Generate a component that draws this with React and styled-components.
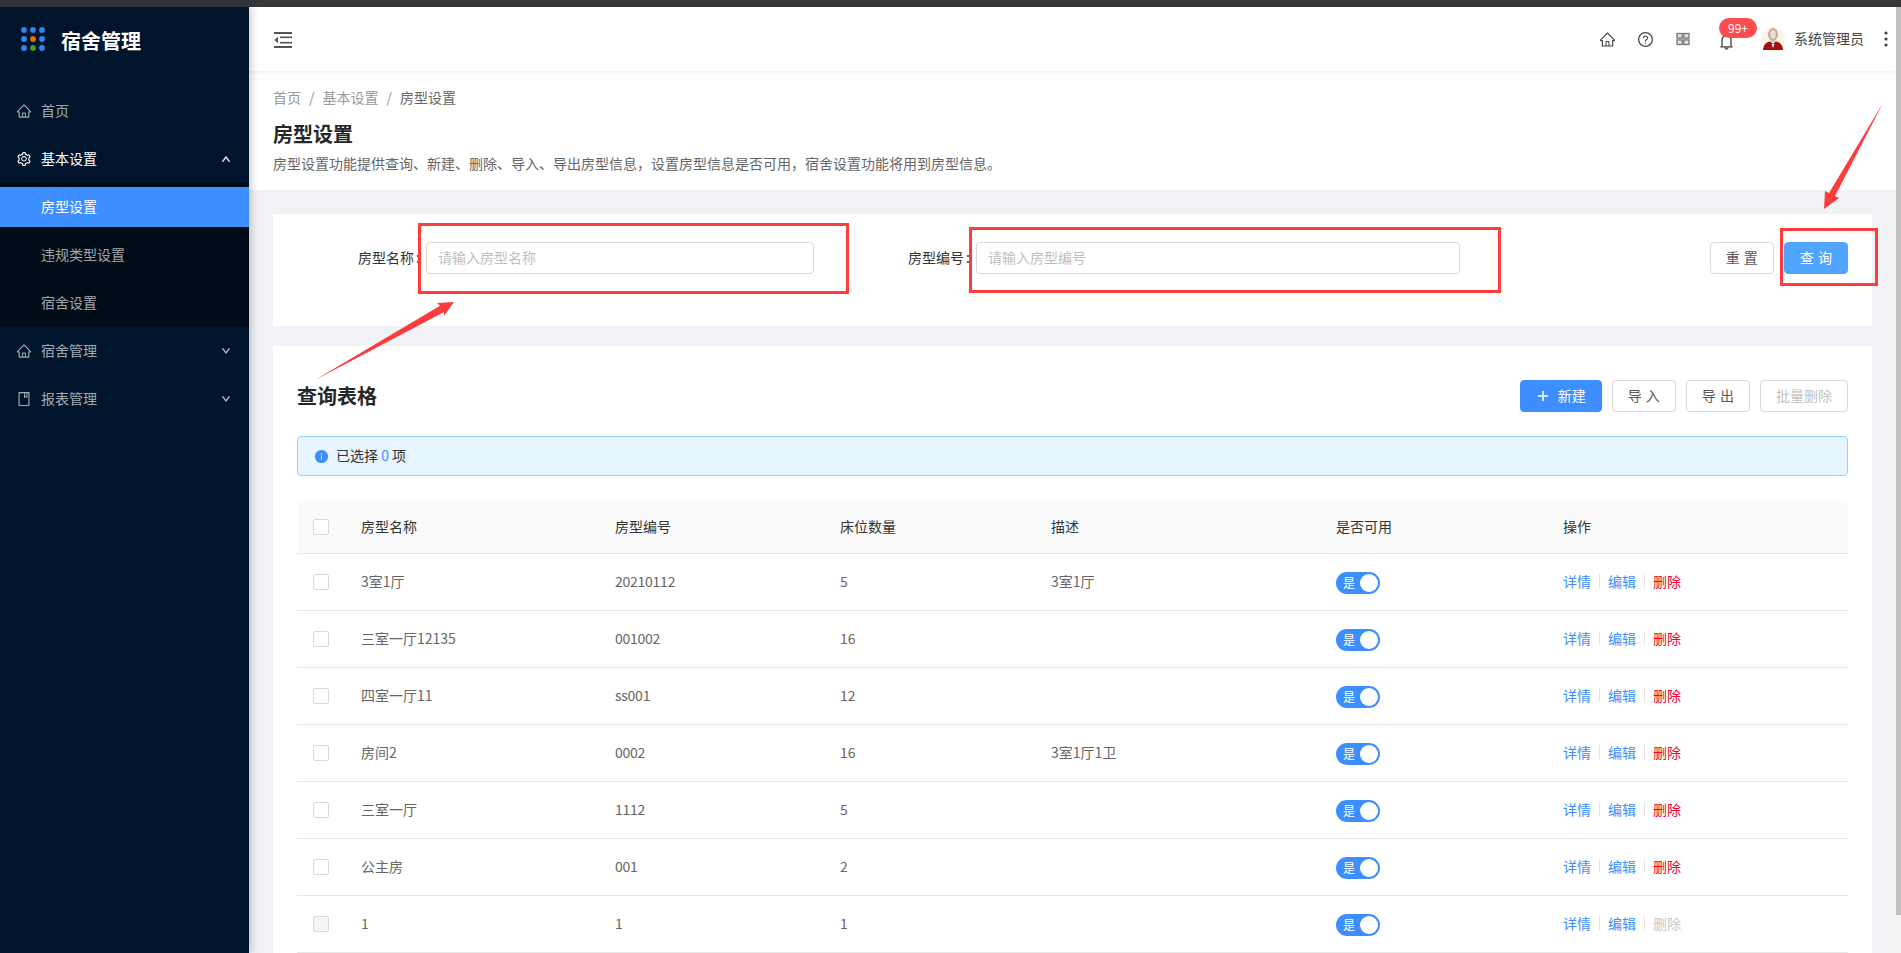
import React from "react";
import styled, { createGlobalStyle } from "styled-components";
import {
  AiOutlineHome,
  AiOutlineSetting,
  AiOutlineBook,
  AiOutlineUp,
  AiOutlineDown,
  AiOutlineQuestionCircle,
  AiOutlineBell,
  AiOutlinePlus,
  AiFillInfoCircle,
} from "react-icons/ai";

const GlobalStyle = createGlobalStyle`
  html, body { margin: 0; padding: 0; height: 100%; overflow: hidden; }
  body { font-family: "Noto Sans CJK SC", "Noto Sans", sans-serif; font-size: 14px; color: #333; background: #f0f2f5; }
  * { box-sizing: border-box; }
  #root { height: 100%; }
`;

const Page = styled.div`
  height: 953px;
  display: flex;
  flex-direction: column;
`;
const TopStrip = styled.div`
  height: 7px;
  flex: none;
  background: #35363a;
`;
const Body = styled.div`
  flex: 1;
  min-height: 0;
  display: flex;
`;

/* Sidebar */
const Sidebar = styled.aside`
  width: 249px;
  flex: none;
  background: #00152c;
  box-shadow: 2px 0 8px rgba(29, 35, 41, 0.25);
  position: relative;
  z-index: 2;
`;
const Brand = styled.div`
  height: 64px;
  display: flex;
  align-items: center;
  gap: 16px;
  padding-left: 21px;
`;
const BrandName = styled.span`
  margin-top: 3px;
  font-size: 20px;
  line-height: 28px;
  font-weight: 700;
  color: #fff;
`;
const Menu = styled.nav`
  display: flex;
  flex-direction: column;
  padding-top: 16px;
`;
const MenuItem = styled.div`
  height: 40px;
  margin: 4px 0;
  padding: 0 18px 2px 16px;
  display: flex;
  align-items: center;
  gap: 9px;
  color: ${(p) => (p.$open ? "#fff" : "rgba(255, 255, 255, 0.65)")};
  font-size: 14px;
  line-height: 22px;
  svg { margin-top: 2px; flex: none; }
  svg.lead { font-size: 16px; }
  svg.caret { font-size: 10px; margin-left: auto; stroke: currentColor; stroke-width: 70; }
`;
const SubMenu = styled.div`
  display: flex;
  flex-direction: column;
  background: #000c17;
`;
const SubItem = styled.div`
  height: 40px;
  margin: 4px 0;
  padding: 0 0 2px 41px;
  display: flex;
  align-items: center;
  font-size: 14px;
  color: ${(p) => (p.$active ? "#fff" : "rgba(255, 255, 255, 0.65)")};
  background: ${(p) => (p.$active ? "#3d8fff" : "transparent")};
`;

/* Main */
const Main = styled.main`
  flex: 1;
  min-width: 0;
  overflow: hidden;
  background: #f0f2f5;
`;
const ScrollRail = styled.div`
  width: 5px;
  flex: none;
  background: #f3f3f3;
`;
const ScrollThumb = styled.div`
  height: 908px;
  background: #c0c0c0;
`;
const TopBar = styled.header`
  height: 64px;
  background: #fff;
  box-shadow: 0 1px 4px rgba(0, 21, 41, 0.08);
  display: flex;
  align-items: center;
  padding-left: 25px;
  position: relative;
`;
const CollapseIcon = styled.svg`
  width: 18px;
  height: 16px;
  margin-top: 2px;
  flex: none;
`;
const TopActions = styled.div`
  margin-left: auto;
  display: flex;
  align-items: center;
`;
const TopIcon = styled.span`
  width: 38px;
  height: 38px;
  display: flex;
  align-items: center;
  justify-content: center;
  font-size: 17px;
  color: #444;
  position: relative;
`;
const BellBox = styled(TopIcon)`
  margin: 0 16px 0 5px;
  font-size: 19px;
  svg { margin-top: 5px; }
`;
const Badge = styled.span`
  position: absolute;
  left: 12px;
  top: -2px;
  width: 38px;
  height: 20px;
  border-radius: 10px;
  background: #ff4d4f;
  color: #fff;
  font-size: 12px;
  line-height: 20px;
  text-align: center;
`;
const Avatar = styled.svg`
  width: 24px;
  height: 24px;
  flex: none;
`;
const UserName = styled.span`
  margin: 0 12px 0 9px;
  color: #444;
  font-size: 14px;
  line-height: 22px;
  padding-bottom: 2px;
`;
const Kebab = styled.svg`
  width: 20px;
  height: 20px;
  flex: none;
`;

const PageHead = styled.section`
  background: #fff;
  padding: 15px 24px 16px;
`;
const Crumbs = styled.div`
  font-size: 14px;
  line-height: 22px;
  color: #999;
`;
const CrumbSep = styled.span`
  margin: 0 8px;
`;
const CrumbLast = styled.span`
  color: #666;
`;
const PageTitle = styled.h1`
  margin: 12px 0 0;
  font-size: 20px;
  line-height: 28px;
  font-weight: 700;
  color: #262626;
`;
const PageDesc = styled.p`
  margin: 4px 0 0;
  font-size: 14px;
  line-height: 22px;
  color: #666;
`;

const Content = styled.div`
  padding: 24px;
  display: flex;
  flex-direction: column;
  gap: 20px;
`;
const Card = styled.section`
  background: #fff;
`;
const SearchCard = styled(Card)`
  display: flex;
  align-items: center;
  padding: 28px 24px 52px 0;
`;
const Field = styled.label`
  display: flex;
  align-items: center;
  margin-right: ${(p) => p.$gapAfter}px;
`;
const FieldLabel = styled.span`
  width: ${(p) => p.$width}px;
  padding: 0 6px 2px 0;
  text-align: right;
  color: #333;
  font-size: 14px;
  line-height: 22px;
`;
const Colon = styled.span`
  margin-left: 2px;
`;
const TextInput = styled.input`
  width: ${(p) => p.$width}px;
  height: 32px;
  padding: 0 11px 2px;
  border: 1px solid #d9d9d9;
  border-radius: 4px;
  font: inherit;
  color: #333;
  outline: none;
  &::placeholder { color: #bfbfbf; opacity: 1; }
`;
const SearchButtons = styled.div`
  margin-left: auto;
  display: flex;
  gap: 10px;
`;
const Button = styled.button`
  height: 32px;
  padding: 0 15px 2px;
  display: inline-flex;
  align-items: center;
  justify-content: center;
  gap: 8px;
  border-radius: 4px;
  font: inherit;
  line-height: 22px;
  word-spacing: 1px;
  white-space: pre;
  border: 1px solid ${(p) => (p.$kind === "primary" ? "#3d8fff" : p.$kind === "soft" ? "#52a5ff" : "#d9d9d9")};
  background: ${(p) => (p.$kind === "primary" ? "#3d8fff" : p.$kind === "soft" ? "#52a5ff" : "#fff")};
  color: ${(p) => (p.$kind === "primary" || p.$kind === "soft" ? "#fff" : p.$kind === "disabled" ? "#c4c4c4" : "#595959")};
  svg { margin-top: 2px; stroke: currentColor; stroke-width: 40; }
`;

const TableCard = styled(Card)`
  padding: 34px 24px 16px;
`;
const TableHead = styled.div`
  display: flex;
  align-items: center;
  justify-content: space-between;
`;
const TableTitle = styled.h2`
  margin: 0;
  font-size: 20px;
  line-height: 28px;
  font-weight: 700;
  color: #262626;
`;
const TableTools = styled.div`
  display: flex;
  gap: 10px;
`;
const Alert = styled.div`
  margin-top: 24px;
  height: 40px;
  padding: 0 16px;
  display: flex;
  align-items: center;
  gap: 7px;
  background: #e6f5ff;
  border: 1px solid #91d5ff;
  border-radius: 4px;
  color: #333;
  line-height: 22px;
  svg { color: #3d8fff; font-size: 15px; }
`;
const AlertText = styled.span`
  padding-bottom: 2px;
`;
const AlertCount = styled.span`
  color: #3d8fff;
`;
const Table = styled.div`
  margin-top: 24px;
`;
const Row = styled.div`
  display: grid;
  grid-template-columns: 64px 254px 225px 211px 285px 227px 1fr;
  align-items: center;
  height: ${(p) => (p.$head ? 54 : 57)}px;
  border-bottom: 1px solid #e8e8e8;
  background: ${(p) => (p.$head ? "#fafafa" : "#fff")};
  border-radius: ${(p) => (p.$head ? "4px 4px 0 0" : "0")};
  color: ${(p) => (p.$head ? "#333" : "#666")};
  line-height: 22px;
`;
const HeadCell = styled.span`
  padding-bottom: 1px;
`;
const Cell = styled.span`
  padding-bottom: 2px;
`;
const Code = styled(Cell)`
  letter-spacing: -0.25px;
`;
const Check = styled.span`
  display: block;
  width: 16px;
  height: 16px;
  margin-left: 16px;
  border: 1px solid #d9d9d9;
  border-radius: 2px;
  background: ${(p) => (p.$disabled ? "#f5f5f5" : "#fff")};
`;
const Toggle = styled.span`
  width: 44px;
  height: 22px;
  margin-top: 2px;
  border-radius: 11px;
  background: #3d8fff;
  color: #fff;
  font-size: 12px;
  line-height: 21px;
  padding-left: 7px;
  display: block;
  position: relative;
`;
const Knob = styled.i`
  position: absolute;
  right: 2px;
  top: 2px;
  width: 18px;
  height: 18px;
  border-radius: 50%;
  background: #fff;
`;
const Actions = styled.div`
  display: flex;
  align-items: center;
  padding-bottom: 2px;
`;
const ActionLink = styled.span`
  color: ${(p) => (p.$danger ? "#f5002d" : p.$disabled ? "#c8c8c8" : "#3d8fff")};
`;
const ActionSep = styled.i`
  width: 1px;
  height: 14px;
  margin: 0 8px;
  background: #e4e4e4;
`;

const Annotation = styled.svg`
  position: fixed;
  left: 0;
  top: 0;
  width: 1901px;
  height: 953px;
  pointer-events: none;
  z-index: 10;
`;

const rooms = [
  ["3室1厅", "20210112", "5", "3室1厅", true],
  ["三室一厅12135", "001002", "16", "", true],
  ["四室一厅11", "ss001", "12", "", true],
  ["房间2", "0002", "16", "3室1厅1卫", true],
  ["三室一厅", "1112", "5", "", true],
  ["公主房", "001", "2", "", true],
  ["1", "1", "1", "", false],
];

const DESCRIPTION =
  "房型设置功能提供查询、新建、删除、导入、导出房型信息\uFF0C设置房型信息是否可用\uFF0C宿舍设置功能将用到房型信息。";

const LogoMark = () => (
  <svg width="24" height="24" viewBox="0 0 24 24" style={{ flex: "none" }}>
    {[0, 1, 2].flatMap((r) =>
      [0, 1, 2].map((c) => (
        <circle
          key={`${r}${c}`}
          cx={3 + c * 9}
          cy={3 + r * 9}
          r="2.9"
          fill={r === 1 && c === 1 ? "#ee6c00" : r === 2 && c === 1 ? "#3f9c2f" : "#2f86f0"}
        />
      ))
    )}
  </svg>
);

const GridIcon = () => (
  <svg width="14" height="14" viewBox="0 0 14 14" fill="#e2e2e2" stroke="#757575" strokeWidth="1.3">
    <rect x="1" y="1.5" width="5.2" height="4.6" />
    <rect x="7.8" y="1.5" width="5.2" height="4.6" />
    <rect x="1" y="7.9" width="5.2" height="4.6" />
    <rect x="7.8" y="7.9" width="5.2" height="4.6" />
  </svg>
);

const UserAvatar = () => (
  <Avatar viewBox="0 0 24 24">
    <circle cx="12" cy="12" r="12" fill="#fbf5e8" />
    <ellipse cx="12" cy="7.5" rx="5" ry="6.5" fill="#cfa899" />
    <ellipse cx="12" cy="7.5" rx="2.8" ry="4.2" fill="#ecdcd4" />
    <path d="M2 23c0-5 3.6-8 7-8.5h6c3.400 .5 7 3.500 7 8.500z" fill="#a50e0e" />
    <path d="M9.600 14.500h4.800L12 21z" fill="#fff" />
    <path d="M10 15.500l2 1 2-1v2l-2-1-2 1z" fill="#7a0a0a" />
  </Avatar>
);

export default function App() {
  return (
    <>
      <GlobalStyle />
      <Page>
        <TopStrip />
        <Body>
          <Sidebar>
            <Brand>
              <LogoMark />
              <BrandName>宿舍管理</BrandName>
            </Brand>
            <Menu>
              <MenuItem>
                <AiOutlineHome className="lead" />
                首页
              </MenuItem>
              <MenuItem $open>
                <AiOutlineSetting className="lead" />
                基本设置
                <AiOutlineUp className="caret" />
              </MenuItem>
              <SubMenu>
                <SubItem $active>房型设置</SubItem>
                <SubItem>违规类型设置</SubItem>
                <SubItem>宿舍设置</SubItem>
              </SubMenu>
              <MenuItem>
                <AiOutlineHome className="lead" />
                宿舍管理
                <AiOutlineDown className="caret" />
              </MenuItem>
              <MenuItem>
                <AiOutlineBook className="lead" />
                报表管理
                <AiOutlineDown className="caret" />
              </MenuItem>
            </Menu>
          </Sidebar>
          <Main>
            <TopBar>
              <CollapseIcon viewBox="0 0 18 16">
                <g fill="#555">
                  <rect x="0" y="0" width="18" height="2" />
                  <rect x="0" y="14" width="18" height="2" />
                  <rect x="6" y="4.500" width="12" height="1.600" />
                  <rect x="6" y="9.900" width="12" height="1.600" />
                  <polygon points="0.4,8 4,4.8 4,11.2" />
                </g>
              </CollapseIcon>
              <TopActions>
                <TopIcon>
                  <AiOutlineHome />
                </TopIcon>
                <TopIcon>
                  <AiOutlineQuestionCircle />
                </TopIcon>
                <TopIcon>
                  <GridIcon />
                </TopIcon>
                <BellBox>
                  <AiOutlineBell />
                  <Badge>99+</Badge>
                </BellBox>
                <UserAvatar />
                <UserName>系统管理员</UserName>
                <Kebab viewBox="0 0 20 20">
                  <circle cx="10" cy="4" r="1.6" fill="#444" />
                  <circle cx="10" cy="10" r="1.6" fill="#444" />
                  <circle cx="10" cy="16" r="1.6" fill="#444" />
                </Kebab>
              </TopActions>
            </TopBar>
            <PageHead>
              <Crumbs>
                首页
                <CrumbSep>/</CrumbSep>
                基本设置
                <CrumbSep>/</CrumbSep>
                <CrumbLast>房型设置</CrumbLast>
              </Crumbs>
              <PageTitle>房型设置</PageTitle>
              <PageDesc>{DESCRIPTION}</PageDesc>
            </PageHead>
            <Content>
              <SearchCard>
                <Field $gapAfter={92}>
                  <FieldLabel $width={153}>
                    房型名称<Colon>:</Colon>
                  </FieldLabel>
                  <TextInput $width={388} placeholder="请输入房型名称" />
                </Field>
                <Field $gapAfter={0}>
                  <FieldLabel $width={70}>
                    房型编号<Colon>:</Colon>
                  </FieldLabel>
                  <TextInput $width={484} placeholder="请输入房型编号" />
                </Field>
                <SearchButtons>
                  <Button>重 置</Button>
                  <Button $kind="soft">查 询</Button>
                </SearchButtons>
              </SearchCard>
              <TableCard>
                <TableHead>
                  <TableTitle>查询表格</TableTitle>
                  <TableTools>
                    <Button $kind="primary">
                      <AiOutlinePlus />
                      新建
                    </Button>
                    <Button>导 入</Button>
                    <Button>导 出</Button>
                    <Button $kind="disabled">批量删除</Button>
                  </TableTools>
                </TableHead>
                <Alert>
                  <AiFillInfoCircle />
                  <AlertText>
                    已选择 <AlertCount>0</AlertCount> 项
                  </AlertText>
                </Alert>
                <Table>
                  <Row $head>
                    <Check />
                    <HeadCell>房型名称</HeadCell>
                    <HeadCell>房型编号</HeadCell>
                    <HeadCell>床位数量</HeadCell>
                    <HeadCell>描述</HeadCell>
                    <HeadCell>是否可用</HeadCell>
                    <HeadCell>操作</HeadCell>
                  </Row>
                  {rooms.map(([name, code, beds, desc, deletable]) => (
                    <Row key={name + code}>
                      <Check $disabled={!deletable} />
                      <Cell>{name}</Cell>
                      <Code>{code}</Code>
                      <Cell>{beds}</Cell>
                      <Cell>{desc}</Cell>
                      <Toggle>
                        是
                        <Knob />
                      </Toggle>
                      <Actions>
                        <ActionLink>详情</ActionLink>
                        <ActionSep />
                        <ActionLink>编辑</ActionLink>
                        <ActionSep />
                        <ActionLink $danger={deletable} $disabled={!deletable}>
                          删除
                        </ActionLink>
                      </Actions>
                    </Row>
                  ))}
                </Table>
              </TableCard>
            </Content>
          </Main>
          <ScrollRail>
            <ScrollThumb />
          </ScrollRail>
        </Body>
      </Page>
      <Annotation viewBox="0 0 1901 953">
        <g fill="none" stroke="#ff3b3b" strokeWidth="3">
          <rect x="419.5" y="224.5" width="428" height="68" />
          <rect x="970.5" y="228.5" width="529" height="63" />
          <rect x="1781.5" y="229.5" width="95" height="55" />
        </g>
        <polygon
          fill="#ff3b3b"
          points="315,380 440,305.8 437,303 454,302 444,316 444,312"
        />
        <polygon
          fill="#ff3b3b"
          points="1883,103 1835,196 1839,198 1824,209 1825,191 1829,193"
        />
      </Annotation>
    </>
  );
}
